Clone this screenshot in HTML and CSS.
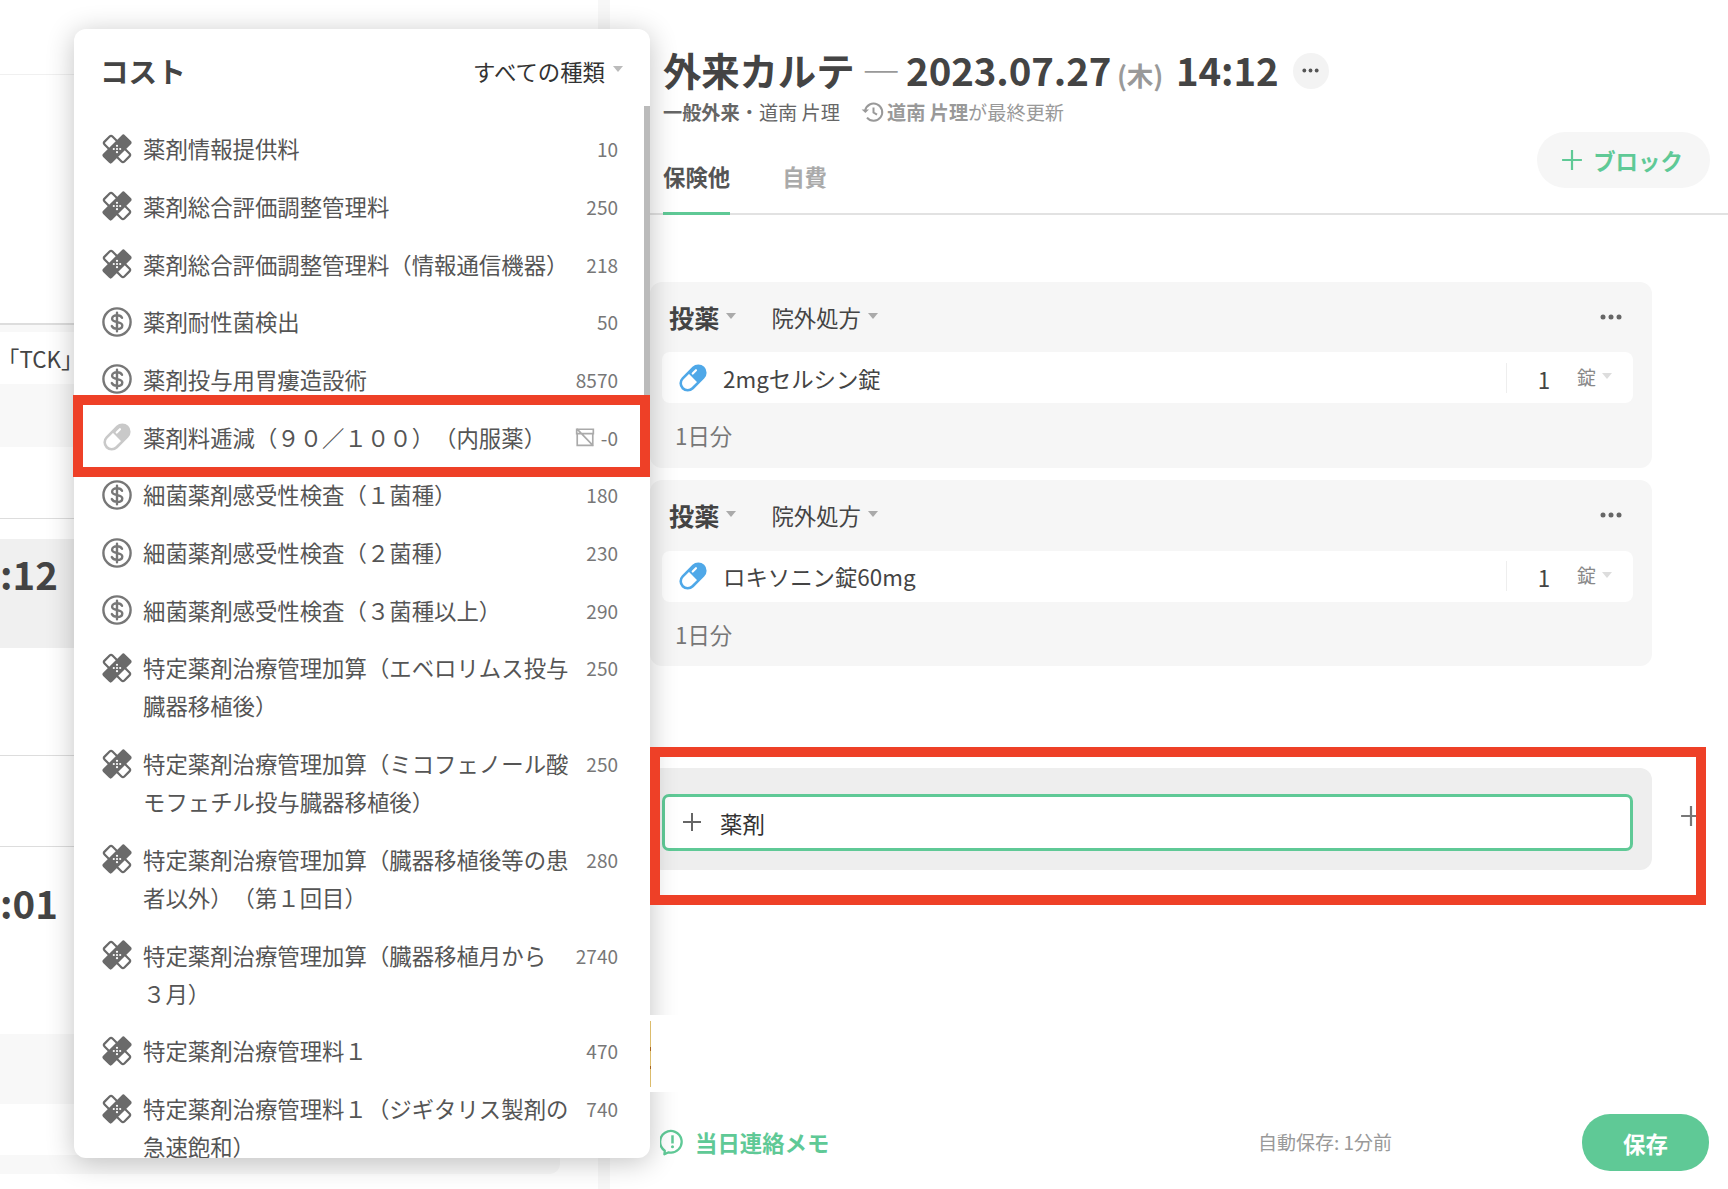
FILE: index.html
```html
<!DOCTYPE html>
<html lang="ja">
<head>
<meta charset="utf-8">
<title>外来カルテ</title>
<link rel="stylesheet" href="styles.css">
</head>
<body>
<svg class="defs" width="0" height="0" aria-hidden="true">
  <defs>
    <symbol id="bandage" viewBox="0 0 30 30">
      <rect x="1" y="9.4" width="28" height="11.2" rx="2" transform="rotate(45 15 15)" fill="#fff" stroke="#6a6a6a" stroke-width="2.2"/>
      <rect x="-0.4" y="8.6" width="30.8" height="12.8" rx="2.2" transform="rotate(-45 15 15)" fill="#6a6a6a"/>
      <g fill="#fff"><circle cx="15" cy="11.8" r="1.1"/><circle cx="11.8" cy="15" r="1.1"/><circle cx="18.2" cy="15" r="1.1"/><circle cx="15" cy="18.2" r="1.1"/><circle cx="15" cy="15" r="1.1"/></g>
    </symbol>
    <symbol id="dollar" viewBox="0 0 30 30">
      <circle cx="15" cy="15" r="13.6" fill="none" stroke="#777" stroke-width="2.4"/>
      <path d="M20 10.8c-.8-1.7-2.6-2.6-4.9-2.6-2.9 0-5 1.4-5 3.6 0 4.6 10.2 2.2 10.2 6.6 0 2.1-2.2 3.5-5.2 3.5-2.5 0-4.5-1-5.3-2.8M15 5.8v18.4" fill="none" stroke="#777" stroke-width="2.4" stroke-linecap="round"/>
    </symbol>
    <symbol id="pill" viewBox="0 0 30 30">
      <g transform="rotate(-45 15 15)">
        <rect x="0.5" y="8" width="29" height="14" rx="7" fill="#fff" stroke="currentColor" stroke-width="2.6"/>
        <path d="M15 8h7.5a7 7 0 0 1 0 14H15z" fill="currentColor"/>
        <path d="M18 11.6h4.6" stroke="#fff" stroke-width="2.2" stroke-linecap="round"/>
      </g>
    </symbol>
    <symbol id="plus" viewBox="0 0 20 20">
      <path d="M10 1v18M1 10h18" fill="none" stroke="currentColor" stroke-width="2"/>
    </symbol>
    <symbol id="dots" viewBox="0 0 22 6">
      <circle cx="3" cy="3" r="2.5" fill="currentColor"/><circle cx="11" cy="3" r="2.5" fill="currentColor"/><circle cx="19" cy="3" r="2.5" fill="currentColor"/>
    </symbol>
  </defs>
</svg>

<div class="page">
  <aside class="history">
    <div class="h-row h-74 line-light"></div>
    <div class="h-row h-250 line-dark"></div>
    <div class="h-row h-8 tint"></div>
    <div class="h-row h-52 tck"><span class="tck-text">「TCK」</span></div>
    <div class="h-row h-63 tint"></div>
    <div class="h-row h-72 line-mid"></div>
    <div class="h-row h-20"></div>
    <div class="h-row h-109 tint-dark time">:12</div>
    <div class="h-row h-108 line-mid"></div>
    <div class="h-row h-91 line-mid"></div>
    <div class="h-row h-187 time time-low">:01</div>
    <div class="h-row h-70 tint"></div>
    <div class="h-row h-51"></div>
    <div class="h-row h-19 tint bar-end"></div>
  </aside>
  <div class="gutter"></div>

  <main class="chart">
    <header class="chart-head">
      <div class="title-line">
        <h1 class="chart-title">外来カルテ <span class="dash">—</span> <span class="date">2023.07.27</span> <span class="weekday">(木)</span> <span class="clock-time">14:12</span></h1>
        <span class="more-circle"><svg class="dots-icon"><use href="#dots"/></svg></span>
      </div>
      <p class="chart-sub">
        <span class="sub-dept"><b>一般外来</b>・道南 片理</span>
        <svg class="clock" viewBox="0 0 24 24"><path d="M4.2 10.5A8.6 8.6 0 1 1 6 17.6" fill="none" stroke="#999" stroke-width="2"/><path d="M0.6 9.5l3.8 3.4 3.6-3.4z" fill="#999"/><path d="M12.5 7.5v5l3.5 2.2" fill="none" stroke="#999" stroke-width="2"/></svg>
        <span class="sub-update"><b>道南 片理</b>が最終更新</span>
      </p>
    </header>

    <div class="tabs">
      <span class="tab tab-on">保険他</span>
      <span class="tab">自費</span>
      <button class="add-block"><svg class="plus-green"><use href="#plus"/></svg>ブロック</button>
    </div>

    <section class="block block-first">
      <div class="block-head">
        <span class="block-kind">投薬</span><i class="caret"></i>
        <span class="block-mode">院外処方</span><i class="caret"></i>
        <svg class="dots-icon block-more"><use href="#dots"/></svg>
      </div>
      <div class="drug">
        <svg class="drug-pill"><use href="#pill"/></svg>
        <span class="drug-name">2mgセルシン錠</span>
        <span class="drug-qty">1</span>
        <span class="drug-unit">錠</span><i class="caret caret-light"></i>
      </div>
      <div class="block-note">1日分</div>
    </section>

    <section class="block">
      <div class="block-head">
        <span class="block-kind">投薬</span><i class="caret"></i>
        <span class="block-mode">院外処方</span><i class="caret"></i>
        <svg class="dots-icon block-more"><use href="#dots"/></svg>
      </div>
      <div class="drug">
        <svg class="drug-pill"><use href="#pill"/></svg>
        <span class="drug-name">ロキソニン錠60mg</span>
        <span class="drug-qty">1</span>
        <span class="drug-unit">錠</span><i class="caret caret-light"></i>
      </div>
      <div class="block-note">1日分</div>
    </section>

    <div class="add-row">
      <div class="add-panel">
        <div class="add-input"><svg class="plus-dark"><use href="#plus"/></svg><span>薬剤</span></div>
      </div>
      <svg class="plus-out"><use href="#plus"/></svg>
    </div>

    <footer class="chart-foot">
      <svg class="memo-icon" viewBox="0 0 26 28"><path d="M5 22.5A11.2 11.2 0 1 1 9 24.2L4.6 26.2z" fill="none" stroke="#5fc996" stroke-width="2.4" stroke-linejoin="round"/><path d="M13 6.5v8.5" stroke="#5fc996" stroke-width="2.6"/><circle cx="13" cy="18.4" r="1.6" fill="#5fc996"/></svg>
      <span class="memo-text">当日連絡メモ</span>
      <span class="autosave">自動保存: 1分前</span>
      <button class="save">保存</button>
    </footer>
  </main>

  <div class="popover">
    <div class="pop-head">
      <span class="pop-title">コスト</span>
      <span class="pop-filter">すべての種類</span><i class="caret caret-pop"></i>
    </div>
    <div class="pop-scroll"></div>
    <ul class="cost-list">
      <li class="cost"><svg class="cost-icon"><use href="#bandage"/></svg><span class="cost-name">薬剤情報提供料</span><span class="cost-num">10</span></li>
      <li class="cost"><svg class="cost-icon"><use href="#bandage"/></svg><span class="cost-name">薬剤総合評価調整管理料</span><span class="cost-num">250</span></li>
      <li class="cost"><svg class="cost-icon"><use href="#bandage"/></svg><span class="cost-name">薬剤総合評価調整管理料（情報通信機器）</span><span class="cost-num">218</span></li>
      <li class="cost"><svg class="cost-icon"><use href="#dollar"/></svg><span class="cost-name">薬剤耐性菌検出</span><span class="cost-num">50</span></li>
      <li class="cost"><svg class="cost-icon"><use href="#dollar"/></svg><span class="cost-name">薬剤投与用胃瘻造設術</span><span class="cost-num">8570</span></li>
      <li class="cost"><svg class="cost-icon pill-gray"><use href="#pill"/></svg><span class="cost-name">薬剤料逓減（９０／１００）（内服薬）</span>
        <svg class="tax-icon" viewBox="0 0 18 18"><path d="M2 6V16.5H16V6M1.5 2H16.5V6H1.5zM1.5 1.5L16.5 17" fill="none" stroke="#aaa" stroke-width="1.5"/></svg><span class="cost-num">-0</span></li>
      <li class="cost"><svg class="cost-icon"><use href="#dollar"/></svg><span class="cost-name">細菌薬剤感受性検査（１菌種）</span><span class="cost-num">180</span></li>
      <li class="cost"><svg class="cost-icon"><use href="#dollar"/></svg><span class="cost-name">細菌薬剤感受性検査（２菌種）</span><span class="cost-num">230</span></li>
      <li class="cost"><svg class="cost-icon"><use href="#dollar"/></svg><span class="cost-name">細菌薬剤感受性検査（３菌種以上）</span><span class="cost-num">290</span></li>
      <li class="cost"><svg class="cost-icon"><use href="#bandage"/></svg><span class="cost-name">特定薬剤治療管理加算（エベロリムス投与臓器移植後）</span><span class="cost-num">250</span></li>
      <li class="cost"><svg class="cost-icon"><use href="#bandage"/></svg><span class="cost-name">特定薬剤治療管理加算（ミコフェノール酸モフェチル投与臓器移植後）</span><span class="cost-num">250</span></li>
      <li class="cost"><svg class="cost-icon"><use href="#bandage"/></svg><span class="cost-name">特定薬剤治療管理加算（臓器移植後等の患者以外）（第１回目）</span><span class="cost-num">280</span></li>
      <li class="cost"><svg class="cost-icon"><use href="#bandage"/></svg><span class="cost-name">特定薬剤治療管理加算（臓器移植月から３月）</span><span class="cost-num">2740</span></li>
      <li class="cost"><svg class="cost-icon"><use href="#bandage"/></svg><span class="cost-name">特定薬剤治療管理料１</span><span class="cost-num">470</span></li>
      <li class="cost"><svg class="cost-icon"><use href="#bandage"/></svg><span class="cost-name">特定薬剤治療管理料１（ジギタリス製剤の急速飽和）</span><span class="cost-num">740</span></li>
    </ul>
  </div>

  <div class="sliver"></div>
  <div class="mark mark-row"></div>
  <div class="mark mark-add"></div>
</div>
</body>
</html>
```
FILE: styles.css
```css
* { box-sizing: border-box; }
html, body { margin: 0; padding: 0; background: #fff; }
body { font-family: "Noto Sans CJK JP", "Noto Sans", sans-serif; color: #444; font-size: 22.4px; text-spacing-trim: space-all; }
.defs { position: absolute; }
.page { position: relative; display: flex; width: 1728px; height: 1189px; overflow: hidden; background: #fff; }

/* left history column */
.history { width: 598px; flex: none; display: flex; flex-direction: column; }
.gutter { width: 12px; flex: none; background: #f7f7f7; }
.h-row { flex: none; }
.h-74 { height: 75px; }
.h-250 { height: 250px; }
.h-8 { height: 7px; }
.h-52 { height: 52px; }
.h-63 { height: 63px; }
.h-72 { height: 72px; }
.h-20 { height: 20px; }
.h-109 { height: 109px; }
.h-108 { height: 108px; }
.h-91 { height: 91px; }
.h-187 { height: 187px; }
.h-70 { height: 70px; }
.h-51 { height: 51px; }
.h-19 { height: 19px; }
.line-light { border-bottom: 1px solid #f0f0f0; }
.line-dark { border-bottom: 2px solid #ddd; }
.line-mid { border-bottom: 1px solid #ddd; }
.tint { background: #f8f8f8; }
.tint-dark { background: #f0f0f0; }
.bar-end { width: 560px; border-radius: 0 0 10px 0; }
.tck { line-height: 52px; color: #444; }
.tck-text { display: block; margin-left: -3px; }
.time { font-size: 38.4px; font-weight: 700; line-height: 68px; color: #444; }
.time-low { padding-top: 21px; }

/* chart */
.chart { flex: 1; min-width: 0; height: 100%; display: flex; flex-direction: column; padding-left: 40px; }
.chart-head { padding: 44px 0 0 13px; }
.title-line { height: 56px; display: flex; align-items: center; }
.chart-title { margin: 0; white-space: pre; font-size: 38.4px; line-height: 56px; font-weight: 700; color: #444; letter-spacing: -0.1px; }
.dash { font-weight: 400; color: #999; margin-left: -1px; letter-spacing: -1px; }
.date { margin-left: -2px; }
.weekday { font-size: 26.6px; color: #999; font-weight: 700; margin-left: -3px; }
.clock-time { margin-left: 4px; }
.more-circle { width: 36px; height: 36px; border-radius: 50%; background: #f3f3f3; display: flex; align-items: center; justify-content: center; margin-left: 14px; margin-top: -3px; }
.dots-icon { width: 17px; height: 5px; color: #555; }
.chart-sub { margin: 0; height: 24px; display: flex; align-items: center; font-size: 19.2px; line-height: 24px; color: #666; }
.sub-dept b, .sub-update b { font-weight: 700; }
.sub-update { color: #999; }
.clock { width: 24px; height: 24px; margin: 0 2px 0 21px; }

.tabs { height: 91px; display: flex; border-bottom: 2px solid #e2e2e2; padding-left: 13px; }
.tab { align-self: flex-end; height: 55px; line-height: 30px; padding-top: 1px; margin-bottom: -2px; font-size: 22.4px; font-weight: 700; color: #aaa; margin-right: 52px; }
.tab-on { color: #555; border-bottom: 3px solid #5fc996; }
.add-block { margin: 8px 18px 0 auto; height: 56px; width: 173px; border: 0; border-radius: 28px; background: #f6f6f6; color: #5fc996; font: 700 22.4px "Noto Sans CJK JP", sans-serif; display: flex; align-items: center; justify-content: center; gap: 10px; padding: 0 3px 0 0; }
.plus-green { width: 22px; height: 22px; color: #5fc996; }

.block { width: 1002px; height: 185.6px; margin-top: 12.6px; background: #f6f6f6; border-radius: 12px; padding: 0 19px 0 12px; }
.block-first { margin-top: 67px; }
.block-head { height: 70.4px; display: flex; align-items: center; padding: 0 11px 0 7px; }
.block-kind { font-size: 25.2px; font-weight: 700; color: #444; margin-top: -1px; }
.block-mode { font-size: 22.4px; color: #444; margin-left: 35px; }
.block-more { margin-left: auto; width: 22px; height: 6px; color: #666; }
.caret { flex: none; display: inline-block; width: 0; height: 0; border-left: 5px solid transparent; border-right: 5px solid transparent; border-top: 6px solid #aaa; margin: -3px 0 0 7px; }
.caret-light { border-top-color: #ddd; margin-left: 6px; }
.caret-pop { margin: -4px 0 0 8px; border-top-color: #bbb; }
.drug { height: 51px; background: #fff; border-radius: 8px; display: flex; align-items: center; padding-left: 16px; padding-right: 21px; }
.drug-pill { width: 30px; height: 30px; color: #4fa8e8; }
.drug-name { margin-left: 15px; color: #444; flex: 1; }
.drug-qty { width: 71px; height: 30px; line-height: 32px; text-align: center; border-left: 1px solid #eee; padding-left: 4px; }
.drug-unit { font-size: 19px; color: #888; margin-top: -3px; }
.block-note { padding: 13px 0 0 13px; line-height: 38px; color: #777; }

.add-row { display: flex; margin-top: 102px; }
.add-panel { width: 1002px; height: 102px; background: #eee; border-radius: 12px; padding: 26px 19px 0 12px; }
.add-input { height: 57px; background: #fff; border: 3px solid #5fc996; border-radius: 7px; display: flex; align-items: center; padding-left: 17px; color: #333; }
.add-input span { margin-left: 1px; padding-top: 1px; }
.plus-dark { width: 20px; height: 20px; color: #666; margin-right: 17px; }
.plus-out { width: 22px; height: 22px; color: #777; margin: 37px 0 0 28px; }

.chart-foot { margin-top: auto; height: 57px; margin-bottom: 18px; display: flex; align-items: center; padding-left: 10px; margin-right: 19px; }
.memo-icon { width: 25px; height: 27px; }
.memo-text { margin-left: 10px; margin-top: -2px; color: #5fc996; font-weight: 700; font-size: 22.4px; }
.autosave { margin-left: auto; margin-right: 190px; margin-top: -2px; font-size: 19px; color: #999; }
.save { width: 127px; height: 57px; border: 0; border-radius: 28px; background: #5fc996; color: #fff; font: 700 22.4px "Noto Sans CJK JP", sans-serif; padding: 0; }

/* popover */
.popover { position: absolute; left: 74px; top: 29px; width: 576px; height: 1129px; background: #fff; border-radius: 12px; box-shadow: 0 4px 28px rgba(0,0,0,.24); overflow: hidden; z-index: 5; }
.pop-head { height: 90.5px; display: flex; align-items: center; padding: 0 27px 6px 27px; }
.pop-title { font-size: 28.6px; font-weight: 700; color: #444; margin-right: auto; margin-left: -1px; margin-top: -1px; }
.pop-filter { font-size: 22.4px; color: #333; }
.pop-scroll { position: absolute; right: 0; top: 77px; width: 6px; height: 370px; background: #bbb; }
.cost-list { list-style: none; margin: 0; padding: 0; }
.cost { display: flex; align-items: flex-start; padding: 9.8px 32px 9.8px 28px; line-height: 38.08px; color: #555; }
.cost-icon { flex: none; width: 30px; height: 30px; margin: 4.5px 10px 0 0; }
.pill-gray { color: #c9c9c9; }
.cost-name { flex: 1; min-width: 0; padding-left: 1px; }
.cost-num { flex: none; margin: 2px 0 0 10px; font-size: 19px; line-height: 36px; color: #777; }
.tax-icon { flex: none; width: 20px; height: 20px; margin: 9px -4px 0 0; }

.sliver { position: absolute; left: 650px; top: 1015px; width: 40px; height: 77px; z-index: 6; background: linear-gradient(#fff 0 6px, #dcbc6c 6px 32px, #a8641e 32px 36px, #dcbc6c 36px 51px, #a8641e 51px 54px, #dcbc6c 54px 72px, #fff 72px) left top / 1px 100% no-repeat, #fff; }
.mark { position: absolute; border: 10px solid #ee4027; z-index: 7; }
.mark-row { left: 73px; top: 395px; width: 577px; height: 82px; }
.mark-add { left: 650px; top: 747px; width: 1056px; height: 158px; }
```
